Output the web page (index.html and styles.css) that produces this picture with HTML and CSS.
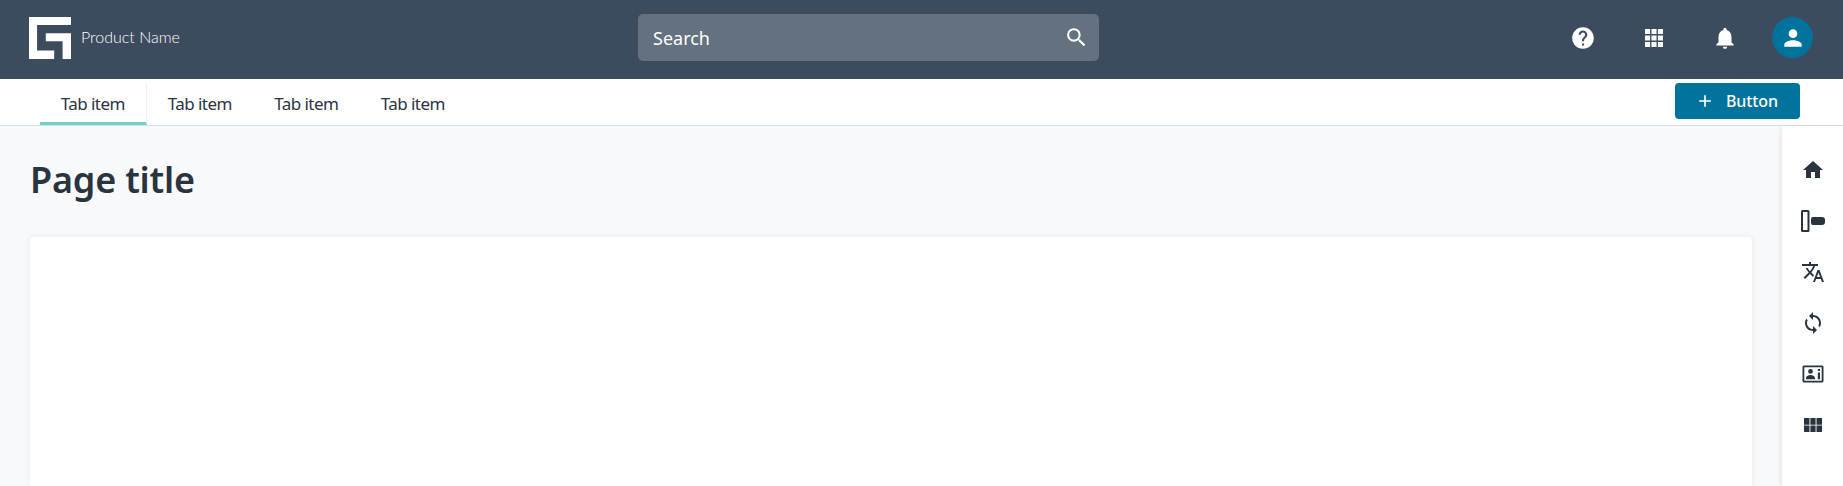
FILE: index.html
```html
<!DOCTYPE html>
<html lang="en">
<head>
<meta charset="utf-8">
<title>Page title</title>
<link rel="stylesheet" href="styles.css">
</head>
<body>
<header class="topbar">
  <div class="brand">
    <svg class="logo" viewBox="0 0 125 125"><path fill="#fff" d="M0 0H125V24H24V100H75V125H0ZM50 48H125V125H100V72H50Z"/></svg>
    <span class="product">Product Name</span>
  </div>
  <div class="search">
    <span class="search-text">Search</span>
    <svg class="search-icon" viewBox="0 0 24 24"><path fill="#fff" d="M15.500 14h-.79l-.28-.27A6.470 6.470 0 0 0 16 9.500 6.500 6.500 0 1 0 9.500 16c1.610 0 3.090-.59 4.230-1.570l.27.28v.79l5 4.990L20.490 19l-4.990-5zm-6 0C7.010 14 5 11.990 5 9.500S7.010 5 9.500 5 14 7.010 14 9.500 11.990 14 9.500 14z"/></svg>
  </div>
  <div class="actions">
    <svg class="action" viewBox="0 0 24 24"><path fill="#fff" d="M12 2C6.480 2 2 6.480 2 12s4.480 10 10 10 10-4.480 10-10S17.520 2 12 2zm1 17h-2v-2h2v2zm2.070-7.750l-.9.920C13.450 12.900 13 13.500 13 15h-2v-.5c0-1.100.45-2.100 1.170-2.830l1.240-1.260c.37-.36.59-.86.590-1.410 0-1.100-.9-2-2-2s-2 .9-2 2H8c0-2.210 1.790-4 4-4s4 1.790 4 4c0 .88-.36 1.680-.93 2.250z"/></svg>
    <svg class="action" viewBox="0 0 24 24"><path fill="#fff" d="M3.700 3.700h4.700v4.700H3.700zM9.650 3.700h4.700v4.700h-4.700zM15.600 3.700h4.700v4.700h-4.700zM3.700 9.650h4.700v4.700H3.700zM9.650 9.650h4.700v4.700h-4.700zM15.600 9.650h4.700v4.700h-4.700zM3.700 15.600h4.700v4.700H3.700zM9.650 15.600h4.700v4.700h-4.700zM15.600 15.600h4.700v4.700h-4.700z"/></svg>
    <svg class="action" viewBox="0 0 24 24"><path fill="#fff" d="M12 22c1.100 0 2-.9 2-2h-4c0 1.100.9 2 2 2zm6-6v-5c0-3.070-1.630-5.640-4.500-6.320V4c0-.83-.67-1.500-1.500-1.500s-1.500.67-1.500 1.500v.68C7.640 5.360 6 7.920 6 11v5l-2 2v1h16v-1l-2-2z"/></svg>
    <span class="avatar">
      <svg class="avatar-icon" viewBox="0 0 24 24"><path fill="#fff" d="M12 12c2.210 0 4-1.790 4-4s-1.790-4-4-4-4 1.790-4 4 1.790 4 4 4zm0 2c-2.670 0-8 1.340-8 4v2h16v-2c0-2.660-5.330-4-8-4z"/></svg>
    </span>
  </div>
</header>
<nav class="tabbar">
  <div class="tabs">
    <a class="tab tab-active">Tab item</a>
    <a class="tab">Tab item</a>
    <a class="tab">Tab item</a>
    <a class="tab">Tab item</a>
  </div>
  <button class="btn">
    <svg class="btn-icon" viewBox="0 0 24 24"><path fill="#fff" d="M19 13h-6v6h-2v-6H5v-2h6V5h2v6h6v2z"/></svg>
    <span>Button</span>
  </button>
</nav>
<div class="body">
  <main class="main">
    <h1 class="title">Page title</h1>
    <section class="card"></section>
  </main>
  <aside class="rail">
    <svg class="rail-icon" viewBox="0 0 24 24"><path d="M10 20v-6h4v6h5v-8h3L12 3 2 12h3v8z"/></svg>
    <svg class="rail-icon" viewBox="0 0 24 24"><path fill-rule="evenodd" d="M1.500 1h5.500a1.500 1.500 0 0 1 1.500 1.500v19a1.500 1.500 0 0 1-1.500 1.500H1.500A1.500 1.500 0 0 1 0 21.500v-19A1.500 1.500 0 0 1 1.500 1zM2 3v18h4.500V3zM12 8h9a3 3 0 0 1 3 3v2a3 3 0 0 1-3 3h-9a2 2 0 0 1-2-2v-4a2 2 0 0 1 2-2z"/></svg>
    <svg class="rail-icon" viewBox="0 0 24 24"><path d="M12.870 15.070l-2.540-2.510.03-.03A17.520 17.520 0 0 0 14.070 6H17V4h-7V2H8v2H1v1.990h11.170C11.500 7.920 10.440 9.750 9 11.350 8.070 10.320 7.300 9.190 6.690 8h-2c.73 1.630 1.730 3.170 2.980 4.560l-5.090 5.020L4 19l5-5 3.110 3.110.76-2.040zM18.500 10h-2L12 22h2l1.120-3h4.750L21 22h2l-4.500-12zm-2.620 7l1.620-4.330L19.120 17h-3.240z"/></svg>
    <svg class="rail-icon" viewBox="0 0 24 24"><path d="M12 4V1L8 5l4 4V6c3.310 0 6 2.690 6 6 0 1.010-.25 1.970-.7 2.800l1.460 1.460A7.930 7.930 0 0 0 20 12c0-4.420-3.580-8-8-8zm0 14c-3.310 0-6-2.690-6-6 0-1.010.25-1.970.7-2.800L5.240 7.740A7.930 7.930 0 0 0 4 12c0 4.420 3.580 8 8 8v3l4-4-4-4v3z"/></svg>
    <svg class="rail-icon" viewBox="0 0 24 24"><path fill-rule="evenodd" d="M3 3.500h18a1.500 1.500 0 0 1 1.500 1.500v14a1.500 1.500 0 0 1-1.500 1.500H3A1.500 1.500 0 0 1 1.500 19V5A1.500 1.500 0 0 1 3 3.500zM3.300 5.300v13.400h17.400V5.300zM9.500 7a2.400 2.400 0 1 1 0 4.800 2.400 2.400 0 0 1 0-4.800zM5 16.300c0-2 2.800-3.200 4.500-3.200s4.500 1.200 4.500 3.200v1H5zM16.800 7.100h2.200v2h-2.200zM16.800 10.500h2.200v6.800h-2.200z"/></svg>
    <svg class="rail-icon" viewBox="0 0 24 24"><path d="M3 5.500c0-.3.200-.5.500-.5H8.500v6.700H3zM9.400 5h5.200v6.700H9.400zM15.500 5h5c.3 0 .5.200.5.500v6.200h-5.500zM3 12.600h5.500V19h-5c-.3 0-.5-.2-.5-.5zM9.400 12.600h5.200V19H9.400zM15.500 12.600H21v5.900c0 .3-.2.500-.5.500h-5z"/></svg>
  </aside>
</div>
</body>
</html>
```
FILE: styles.css
```css
* { box-sizing: border-box; }
html, body { margin: 0; height: 100%; overflow: hidden; }
body {
  display: flex;
  flex-direction: column;
  background: #f7f9fb;
  font-family: "Noto Sans", "Open Sans", sans-serif;
  color: #29343f;
}
.topbar {
  height: 79px;
  flex: none;
  background: #3d4b5e;
  display: flex;
  align-items: center;
  padding: 0 29px 4px;
}
.brand { display: flex; align-items: center; gap: 10px; width: 609px; }
.logo { width: 42px; height: 42px; display: block; }
.product { font: 300 16px "Lato", sans-serif; color: #fff; position: relative; top: -1px; }
.search {
  width: 461px;
  height: 47px;
  background: #64717e;
  border-radius: 5px;
  display: flex;
  align-items: center;
  justify-content: space-between;
  padding: 0 10px 0 15px;
}
.search-text { color: #fff; font-size: 18px; }
.search-icon { width: 25px; height: 25px; }
.actions { margin-left: auto; display: flex; align-items: center; margin-right: 1px; }
.action { width: 26px; height: 26px; margin-right: 45px; }
.avatar {
  width: 41px; height: 41px; border-radius: 50%;
  background: #00739d;
  display: flex; align-items: center; justify-content: center;
  margin-left: -11px;
}
.avatar-icon { width: 26px; height: 26px; }
.tabbar {
  height: 47px;
  flex: none;
  background: #fff;
  border-bottom: 1px solid #d5dde5;
  display: flex;
  justify-content: space-between;
  padding-left: 40px;
  padding-right: 43px;
}
.tabs { display: flex; }
.tab {
  width: 106.500px;
  height: 46px;
  padding-top: 3px;
  display: flex;
  align-items: center;
  justify-content: center;
  font-size: 17px;
  letter-spacing: -.55px;
  color: #29343f;
}
.tab-active {
  margin-top: 4px;
  height: 42px;
  padding-top: 2px;
  border-bottom: 3px solid #6fcfc9;
  border-right: 1px solid #e9f1f2;
}
.btn {
  margin-top: 4px;
  width: 125px;
  height: 36px;
  border: 0;
  border-radius: 4px;
  background: #00739d;
  color: #fff;
  display: flex;
  align-items: center;
  gap: 11px;
  padding: 0 0 0 20px;
  font: 500 16px "Noto Sans", sans-serif;
  letter-spacing: -.1px;
}
.btn-icon { width: 20px; height: 20px; }
.body { flex: 1; display: flex; min-height: 0; }
.main { flex: 1; padding: 28px 30px 0; min-width: 0; display: flex; flex-direction: column; }
.title { margin: 0 0 31px; font-size: 36px; line-height: 52px; font-weight: 600; letter-spacing: -.2px; }
.card {
  flex: 1;
  background: #fff;
  border-radius: 4px 4px 0 0;
  box-shadow: 0 0 6px rgba(40, 55, 75, .08);
}
.rail {
  width: 61px;
  flex: none;
  background: #fff;
  box-shadow: -2px 0 4px rgba(40, 55, 75, .08);
  display: flex;
  flex-direction: column;
  align-items: center;
  padding-top: 32px;
  gap: 27px;
}
.rail-icon { width: 24px; height: 24px; fill: #29343f; }
```
